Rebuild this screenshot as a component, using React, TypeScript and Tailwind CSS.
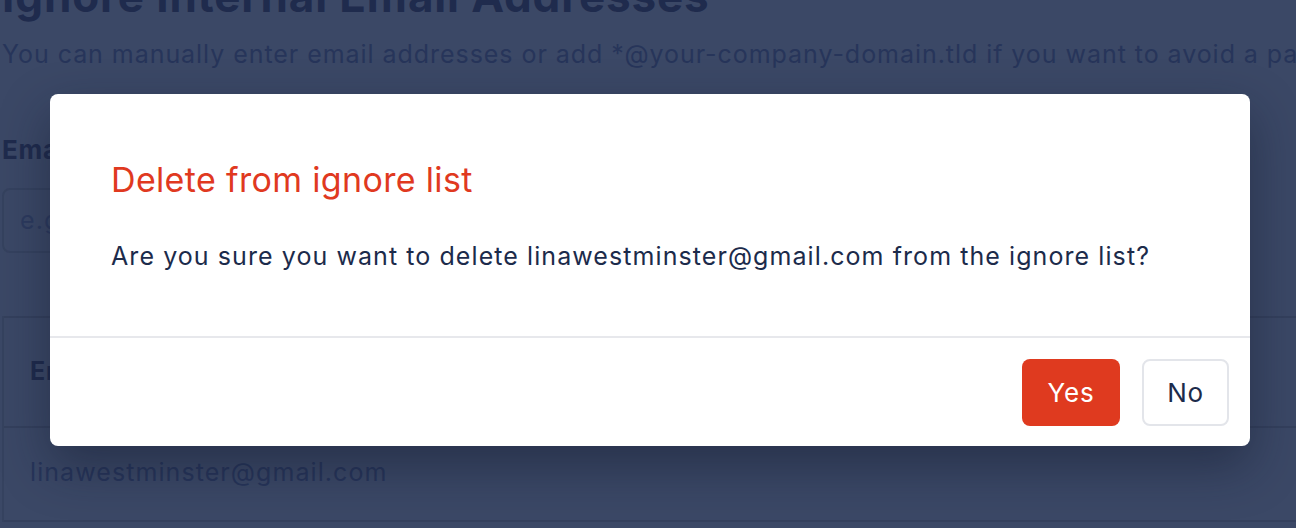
import React from "react";

const font = { fontFamily: "Inter, 'Noto Sans', sans-serif" };

function ConfirmDialog({ email }: { email: string }) {
  return (
    <div className="absolute left-[50px] top-[94px] w-[1200px] rounded-lg bg-white shadow-[0_20px_50px_rgba(15,23,42,0.45)]">
      <div className="pl-[61px] pr-8 pt-[66px] pb-[64px]">
        <h2 className="text-[34px] leading-[40px] tracking-[0.01em] text-[#e0391f]">Delete from ignore list</h2>
        <p className="mt-[40px] text-[25px] leading-[32px] tracking-[0.043em] text-[#1c2b4b]">
          Are you sure you want to delete {email} from the ignore list?
        </p>
      </div>
      <div className="flex justify-end gap-[22px] border-t-2 border-[#e7e8ec] pt-[21px] pr-[21px] pb-[20px]">
        <button className="flex h-[67px] w-[98px] items-center justify-center rounded-lg bg-[#df3a1f] text-[26px] tracking-[0.03em] text-white">
          Yes
        </button>
        <button className="flex h-[67px] w-[87px] items-center justify-center rounded-lg border-2 border-[#e3e5ea] bg-white text-[26px] tracking-[0.03em] text-[#1c2b4b]">
          No
        </button>
      </div>
    </div>
  );
}

export default function App() {
  return (
    <div style={font} className="relative h-[528px] w-[1296px] overflow-hidden bg-[#3b4866]">
      <div className="mt-[-30px] pl-[2px] whitespace-nowrap">
        <h1 className="text-[44px] font-bold leading-[52px] tracking-[0.02em] text-[#1f2b4d]">
          Ignore Internal Email Addresses
        </h1>
        <p className="mt-[16px] text-[25px] leading-[32px] tracking-[0.038em] text-[#27355a]">
          You can manually enter email addresses or add *@your-company-domain.tld if you want to avoid a particular domain
        </p>
        <div className="mt-[64px] text-[26px] font-bold leading-[32px] tracking-[0.03em] text-[#1f2b4d]">Email address</div>
        <div className="mt-[22px] flex h-[65px] w-[600px] items-center rounded-lg border-2 border-[#35425f] pl-[16px] text-[25px] tracking-[0.043em] text-[#2c3a5e]">
          e.g. john@example.com
        </div>
        <div className="mt-[63px] w-[1400px] border-l-2 border-[#35425f]">
          <div className="flex h-[112px] items-center border-y-2 border-[#34405d] pl-[26px] text-[25px] font-bold tracking-[0.03em] text-[#1f2b4d]">
            Email
          </div>
          <div className="flex h-[94px] items-center border-b-2 border-[#34405d] pl-[26px] pb-[2px] text-[25px] tracking-[0.043em] text-[#27355a]">
            linawestminster@gmail.com
          </div>
        </div>
      </div>
      <ConfirmDialog email="linawestminster@gmail.com" />
    </div>
  );
}
